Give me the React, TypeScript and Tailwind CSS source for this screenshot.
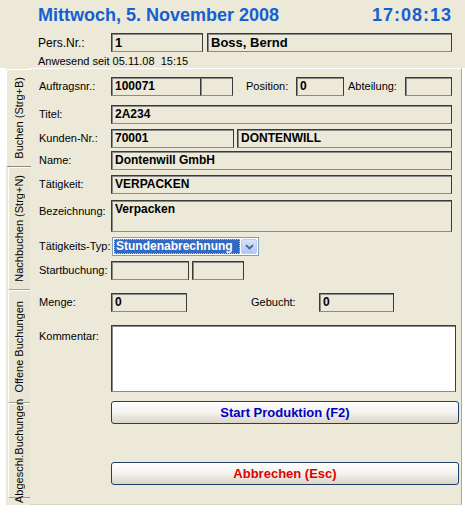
import React from "react";

const box =
  "h-[19px] border border-[#3a3a3a] border-b-[#8a8a8a] shadow-[inset_1px_1px_0_#8a8a8a] bg-[#ECE9D8] pl-[3px] pt-[1px] text-[12px] font-bold leading-[15px] text-black overflow-hidden whitespace-nowrap";

const Field = ({ w, className = "", children }: { w: string; className?: string; children?: React.ReactNode }) => (
  <div className={`${box} ${w} ${className}`}>{children}</div>
);

const Label = ({ children, className = "w-[72px]" }: { children: React.ReactNode; className?: string }) => (
  <span className={`${className} shrink-0 text-[11px] leading-[13px] text-black`}>{children}</span>
);

const tabs = [
  { name: "Buchen (Strg+B)", h: "h-[98px]", active: true },
  { name: "Nachbuchen (Strg+N)", h: "h-[123px]", active: false },
  { name: "Offene Buchungen", h: "h-[113px]", active: false },
  { name: "Abgeschl.Buchungen", h: "h-[95px]", active: false },
];

const App = () => {
  return (
    <div className="w-[465px] h-[514px] bg-white overflow-hidden font-['Liberation_Sans',Arial,sans-serif] text-black">
      <div className="h-[68px] bg-[#ECE9D8] pl-[38px] pr-[13px] pt-[4px]">
        <div className="flex justify-between text-[18px] font-bold leading-[22px] text-[#1460D2]">
          <span>Mittwoch, 5. November 2008</span>
          <span className="tracking-[1px]">17:08:13</span>
        </div>
        <div className="flex items-center mt-[7px]">
          <span className="w-[73px] text-[12px] leading-[14px]">Pers.Nr.:</span>
          <Field w="w-[92px]" className="text-[13px]">1</Field>
          <Field w="w-[245px]" className="ml-[4px] text-[13px]">Boss, Bernd</Field>
        </div>
        <div className="mt-[3px] text-[11px] leading-[13px] whitespace-pre">Anwesend seit 05.11.08  15:15</div>
      </div>

      <div className="flex ml-[6px] w-[456px] h-[437px] bg-[#ECE9D8]">
        <div className="w-[24px] shrink-0 flex flex-col pt-[1px] relative z-10">
          {tabs.map((t) =>
            t.active ? (
              <div
                key={t.name}
                className={`${t.h} -mr-px flex items-center justify-center bg-[#ECE9D8] border-l border-t border-white border-b border-b-[#8d8a7c] rounded-tl-[3px] rounded-bl-[3px]`}
              >
                <span className="[writing-mode:vertical-rl] rotate-180 text-[11px] leading-[13px] whitespace-nowrap">{t.name}</span>
              </div>
            ) : (
              <div
                key={t.name}
                className={`${t.h} ml-[2px] flex items-center justify-center bg-[#E9E6D6] border-l border-t border-white border-b border-b-[#a19e8f] rounded-tl-[3px] rounded-bl-[3px]`}
              >
                <span className="[writing-mode:vertical-rl] rotate-180 text-[11px] leading-[13px] whitespace-nowrap">{t.name}</span>
              </div>
            )
          )}
        </div>

        <div className="flex-1 flex flex-col border-t border-white border-r border-r-[#ACA899] border-b border-b-[#d8d5c6] pt-[8px] pl-[9px]">
          <div className="flex items-center">
            <Label>Auftragsnr.:</Label>
            <Field w="w-[90px]">100071</Field>
            <Field w="w-[33px]" className="-ml-px" />
            <Label className="w-[50px] ml-[13px]">Position:</Label>
            <Field w="w-[48px]">0</Field>
            <Label className="w-[57px] ml-[4px]">Abteilung:</Label>
            <Field w="w-[47px]" />
          </div>

          <div className="flex items-center mt-[9px]">
            <Label>Titel:</Label>
            <Field w="w-[341px]">2A234</Field>
          </div>

          <div className="flex items-center mt-[5px]">
            <Label>Kunden-Nr.:</Label>
            <Field w="w-[123px]">70001</Field>
            <Field w="w-[215px]" className="ml-[3px]">DONTENWILL</Field>
          </div>

          <div className="flex items-center mt-[3px]">
            <Label>Name:</Label>
            <Field w="w-[341px]">Dontenwill GmbH</Field>
          </div>

          <div className="flex items-center mt-[5px]">
            <Label>Tätigkeit:</Label>
            <Field w="w-[341px]">VERPACKEN</Field>
          </div>

          <div className="flex items-start mt-[6px]">
            <Label className="w-[72px] mt-[5px]">Bezeichnung:</Label>
            <Field w="w-[341px] h-[32px]">Verpacken</Field>
          </div>

          <div className="flex items-center mt-[5px]">
            <Label>Tätigkeits-Typ:</Label>
            <div className="w-[147px] h-[19px] ml-px flex border border-[#7F9DB9] bg-white p-[1px]">
              <div className="flex-1 overflow-hidden whitespace-nowrap bg-[#316AC5] text-white text-[12px] font-bold leading-[14px] pl-[2px] outline outline-1 outline-dotted outline-[#c9c27a] -outline-offset-1">
                Stundenabrechnung
              </div>
              <div className="w-[16px] ml-[1px] flex items-center justify-center rounded-[2px] border border-[#B9CCF4] bg-gradient-to-b from-[#D6E2FC] to-[#AFC6F5]">
                <svg width="9" height="6" viewBox="0 0 9 6">
                  <path d="M1 1.2 L4.5 4.5 L8 1.2" fill="none" stroke="#4D6185" strokeWidth="1.8" />
                </svg>
              </div>
            </div>
          </div>

          <div className="flex items-center mt-[5px]">
            <Label>Startbuchung:</Label>
            <Field w="w-[78px] h-[18px]" />
            <Field w="w-[52px] h-[18px]" className="ml-[3px]" />
          </div>

          <div className="flex items-center mt-[13px]">
            <Label>Menge:</Label>
            <Field w="w-[76px] h-[18px]">0</Field>
            <Label className="w-[68px] ml-[64px]">Gebucht:</Label>
            <Field w="w-[75px] h-[18px]">0</Field>
          </div>

          <div className="flex items-start mt-[13px]">
            <Label className="w-[72px] mt-[5px]">Kommentar:</Label>
            <div className="w-[345px] h-[67px] bg-white border border-[#3a3a3a] border-b-[#8a8a8a] shadow-[inset_1px_1px_0_#8a8a8a]" />
          </div>

          <button className="ml-[72px] mt-[9px] w-[348px] h-[23px] rounded-[3px] border border-[#1E3F6B] bg-gradient-to-b from-white via-[#F3F2EC] to-[#D9D5C8] text-[13px] font-bold leading-[15px] text-[#0000C4]">
            Start Produktion (F2)
          </button>

          <button className="ml-[72px] mt-[38px] w-[348px] h-[23px] rounded-[3px] border border-[#1E3F6B] bg-gradient-to-b from-white via-[#F3F2EC] to-[#D9D5C8] text-[13px] font-bold leading-[15px] text-[#E00000]">
            Abbrechen (Esc)
          </button>
        </div>
      </div>
    </div>
  );
};

export default App;
